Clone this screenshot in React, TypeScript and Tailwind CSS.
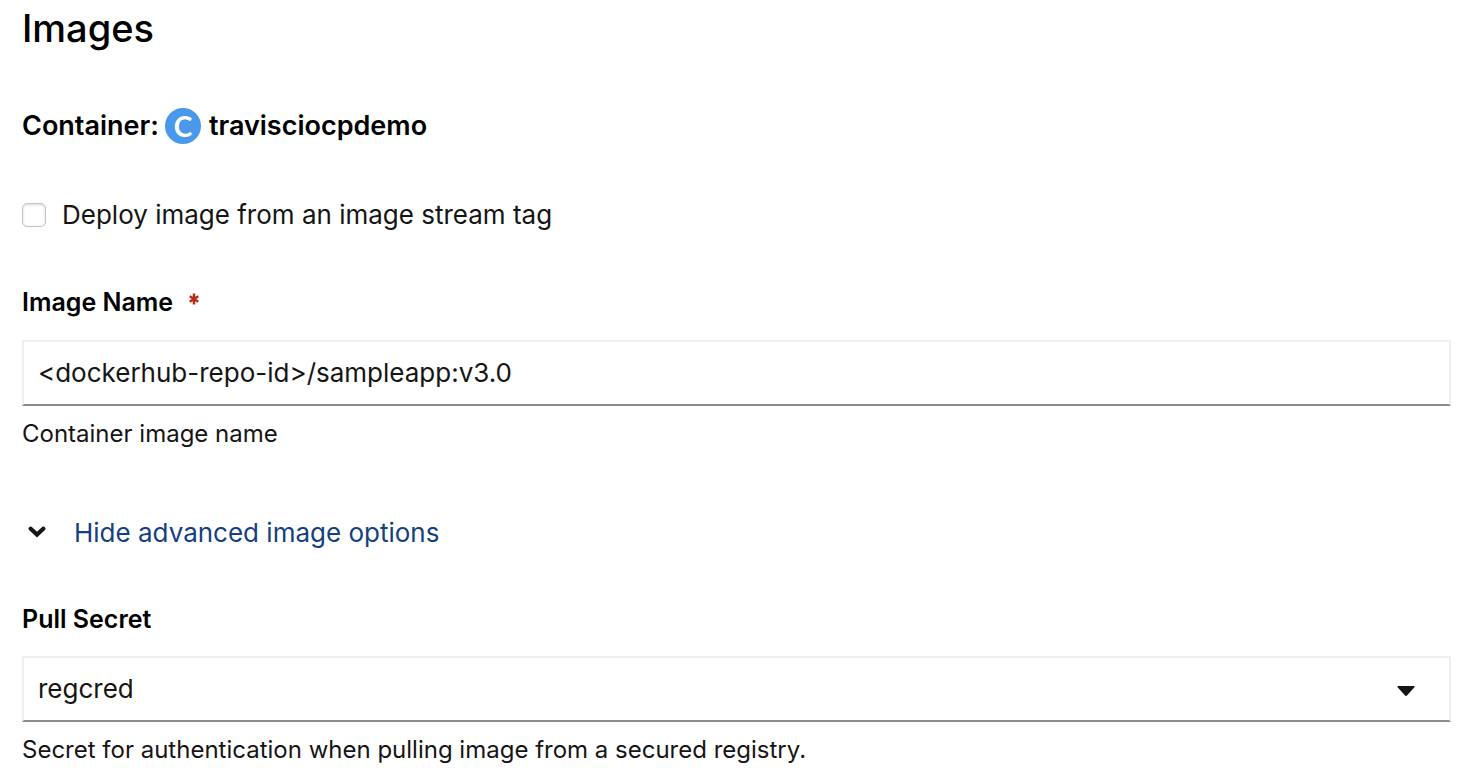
import { useState } from "react";

export default function App() {
  const [fromStream, setFromStream] = useState(false);
  const [image, setImage] = useState("<dockerhub-repo-id>/sampleapp:v3.0");
  const [open, setOpen] = useState(true);

  return (
    <main className="bg-white pr-[13px] pb-3 pl-[22px] font-['Inter','Noto_Sans',sans-serif] text-[#151515]">
      <h1 className="pt-1 text-[38px] leading-[48px] font-medium text-black">Images</h1>

      <h2 className="mt-14 flex h-9 items-center text-[27px] leading-9 font-semibold text-black">
        Container:
        <span className="mr-2 ml-[6px] flex size-9 items-center justify-center rounded-full bg-[#4a98ec] font-['Lato',sans-serif] text-[28px] font-bold text-white">
          C
        </span>
        travisciocpdemo
      </h2>

      <label className="mt-[51px] flex h-10 items-center gap-4 text-[26px] leading-10">
        <input
          type="checkbox"
          checked={fromStream}
          onChange={(e) => setFromStream(e.target.checked)}
          className="size-6 appearance-none rounded-[5px] border border-[#c4c4c4] bg-white shadow-[inset_0_1px_3px_rgba(0,0,0,0.16)] checked:bg-[#06c]"
        />
        Deploy image from an image stream tag
      </label>

      <form className="mt-12" onSubmit={(e) => e.preventDefault()}>
        <label htmlFor="image-name" className="flex h-10 items-center gap-4 text-[25px] font-semibold text-black">
          Image Name
          <svg viewBox="0 0 10 12" className="mb-2 h-3 w-[10px]" role="img" aria-label="required">
            <path d="M5 .5v11M.7 3.3l8.6 5.4M9.3 3.3.7 8.7" stroke="#b92b1c" strokeWidth="2.5" />
          </svg>
        </label>
        <input
          id="image-name"
          value={image}
          onChange={(e) => setImage(e.target.value)}
          aria-describedby="image-help"
          className="mt-[17px] block h-[66px] w-full border-2 border-[#efefef] border-b-[#8a8a8f] px-[14px] pb-[2px] text-[26px] outline-none"
        />
        <p id="image-help" className="mt-2 text-[24px] leading-10">
          Container image name
        </p>

        <button
          type="button"
          aria-expanded={open}
          onClick={() => setOpen(!open)}
          className="mt-[58px] flex h-10 items-center gap-7 pl-[6px] text-[26px] text-[#153f7f]"
        >
          <svg viewBox="0 0 18 12" fill="none" className="h-3 w-[18px]" aria-hidden="true">
            <path d="M2.7 2.7 9 8.6l6.3-5.9" stroke="#151515" strokeWidth="4.2" strokeLinecap="round" strokeLinejoin="miter" />
          </svg>
          Hide advanced image options
        </button>

        {open && (
          <section className="mt-[47px]">
            <label htmlFor="pull-secret" className="block text-[25px] leading-10 font-semibold text-black">
              Pull Secret
            </label>
            <div className="relative mt-[17px]">
              <select
                id="pull-secret"
                aria-describedby="secret-help"
                className="block h-[66px] w-full appearance-none border-2 border-[#efefef] border-b-[#8a8a8f] bg-white px-[14px] pb-[2px] text-[26px] outline-none"
              >
                <option>regcred</option>
              </select>
              <svg viewBox="0 0 18 10" className="pointer-events-none absolute top-[30px] right-9 h-[10px] w-[18px]" aria-hidden="true">
                <path d="M1.5 0h15q2 0 .7 1.5l-7 7.8q-1.2 1.2-2.4 0l-7-7.8Q-.5 0 1.5 0Z" fill="#151515" />
              </svg>
            </div>
            <p id="secret-help" className="mt-2 text-[24px] leading-10">
              Secret for authentication when pulling image from a secured registry.
            </p>
          </section>
        )}
      </form>
    </main>
  );
}
